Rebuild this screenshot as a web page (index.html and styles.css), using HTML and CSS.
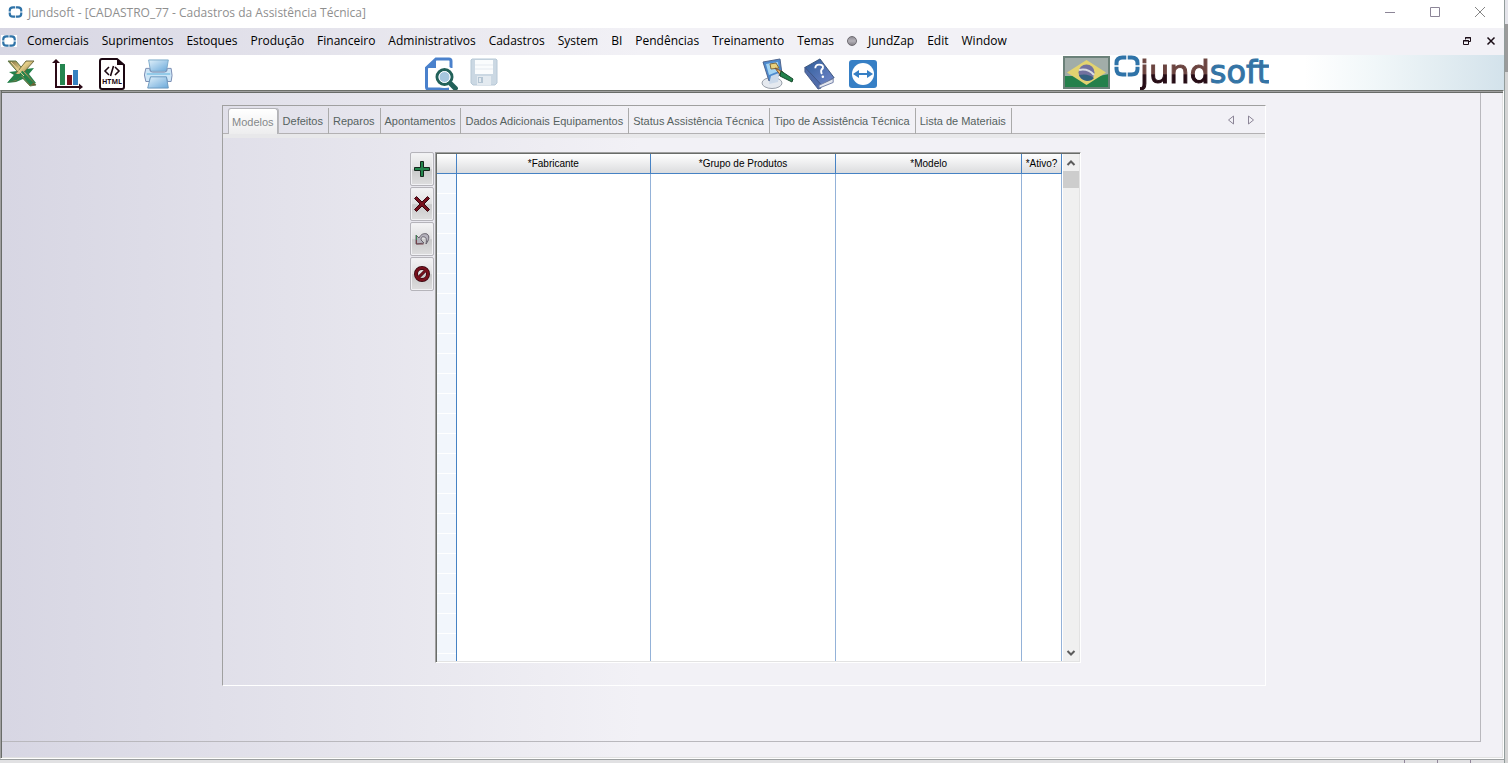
FILE: index.html
```
<!DOCTYPE html>
<html lang="pt-BR">
<head>
<meta charset="utf-8">
<title>Jundsoft - [CADASTRO_77 - Cadastros da Assistência Técnica]</title>
<link rel="stylesheet" href="styles.css">
</head>
<body>
<svg class="defs" aria-hidden="true">
  <defs>
    <linearGradient id="gold" x1="0" y1="0" x2="1" y2="1"><stop offset="0" stop-color="#7d6a3c"/><stop offset=".4" stop-color="#e6d08a"/><stop offset="1" stop-color="#5d4a22"/></linearGradient>
    <linearGradient id="sky" x1="0" y1="0" x2="1" y2="1"><stop offset="0" stop-color="#e0f0fa"/><stop offset="1" stop-color="#6aa9da"/></linearGradient>
    <linearGradient id="navy" x1="0" y1="0" x2="1" y2="1"><stop offset="0" stop-color="#2e5c98"/><stop offset="1" stop-color="#7488cc"/></linearGradient>
    <symbol id="mark" viewBox="0 0 26 22"><path d="M12.300 2.500H8.500Q2.500 2.500 2.500 8v2.300M13.700 2.500H17.500Q23.500 2.500 23.500 8v2.300M2.500 11.700V14Q2.500 19.500 8.500 19.500h3.800M23.500 11.700V14Q23.500 19.500 17.500 19.500h-3.800" fill="none" stroke="#2f73a8" stroke-width="4"/></symbol>
  </defs>
</svg>
<div class="screen">
  <div class="app">
    <header class="titlebar">
      <svg class="mark-small"><use href="#mark"/></svg>
      <h1>Jundsoft - [CADASTRO_77 - Cadastros da Assistência Técnica]</h1>
      <div class="window-buttons">
        <button aria-label="Minimizar"><svg width="12" height="12"><path d="M1 6.500h10" stroke="#8c8597" fill="none"/></svg></button>
        <button aria-label="Maximizar"><svg width="12" height="12"><path d="M1.500 1.500h9v9h-9z" stroke="#8c8597" fill="none"/></svg></button>
        <button aria-label="Fechar"><svg width="12" height="12"><path d="M1 1l10 10M11 1L1 11" stroke="#858585" fill="none"/></svg></button>
      </div>
    </header>
    <nav class="menubar">
      <svg class="mark-small boxed"><use href="#mark"/></svg>
      <div class="menus">
        <button>Comerciais</button><button>Suprimentos</button><button>Estoques</button><button>Produção</button><button>Financeiro</button><button>Administrativos</button><button>Cadastros</button><button>System</button><button>BI</button><button>Pendências</button><button>Treinamento</button><button>Temas</button><button class="zap"><span class="ball"></span>JundZap</button><button>Edit</button><button>Window</button>
      </div>
      <div class="child-buttons">
        <button aria-label="Restaurar"><svg width="10" height="10"><path d="M3.500 3.500v-2h5v4h-2M1.500 4.500h5v4h-5zM1 5h6M3 2h6" stroke="#1a0d16" fill="none"/></svg></button>
        <button aria-label="Fechar janela"><svg width="10" height="10"><path d="M1.500 1.500l7 7M8.500 1.500l-7 7" stroke="#1a0d16" stroke-width="1.500" fill="none"/></svg></button>
      </div>
    </nav>
    <div class="toolbar">
      <div class="tools files">
        <button aria-label="Excel"><svg width="30" height="30" viewBox="0 0 30 30"><path d="M19 10l8-1-5 6 7 9-8 1-5-5-7 3-9 1 7-8-5-3 8-1 4 2z" fill="#24814b"/><path d="M1 2h8l20 24-6 1z" fill="url(#gold)" stroke="#5f7a49"/><path d="M19 2h8L9 22H3z" fill="url(#gold)" stroke="#6f6b3e"/><path d="M14 13l11 12" stroke="#23824a" stroke-width="4"/><path d="M1 23l7-8h8l-6 6z" fill="#24814b"/><path d="M4 3l13 14" stroke="#f0dda0"/></svg></button>
        <button aria-label="Gráfico"><svg width="32" height="32" viewBox="0 0 32 32"><path d="M8 6h5v21H8z" fill="#24854f"/><path d="M15 17h5v10h-5z" fill="#74101c"/><path d="M21 12h5v15h-5z" fill="#3681c1"/><path d="M4 3v26h25" fill="none" stroke="#2b0a17" stroke-width="2"/><path d="M0 5l4-4 4 4zM27 25.500l4 3.500-4 3z" fill="#2b0a17"/></svg></button>
        <button aria-label="HTML"><svg width="26" height="32" viewBox="0 0 26 32"><path d="M3 1h15l7 6v22q0 2-2 2H3q-2 0-2-2V3q0-2 2-2z" fill="#fff" stroke="#1b0711" stroke-width="2"/><path d="M18 1v6h7z" fill="#1b0711"/><path d="M10 9l-4 4 4 4M16 9l4 4-4 4M14.500 8l-3 10" fill="none" stroke="#1b0711" stroke-width="1.600"/><text x="13" y="26" text-anchor="middle" class="html-label">HTML</text></svg></button>
        <button aria-label="Imprimir"><svg width="30" height="32" viewBox="0 0 32 34"><path d="M6 2h21l-2 12H8z" fill="url(#sky)" stroke="#79a8c9"/><path d="M3 11h4q0 4 3 4h13q3 0 3-4h4q2 8 0 14h-4l-1-4H8l-1 4H3q-3-7 0-14z" fill="#cce5f6" stroke="#7689b0"/><path d="M4 17h25" stroke="#8fc9e8" stroke-width="2"/><path d="M8 20h17l2 12H5z" fill="url(#sky)" stroke="#6796bd"/></svg></button>
      </div>
      <div class="tools records">
        <button aria-label="Pesquisar"><svg width="33" height="34" viewBox="0 0 33 34"><path d="M26 11V4q0-2-2-2H11L1.500 11v19q0 2 2 2H24" fill="none" stroke="#4a81cc" stroke-width="3"/><path d="M1 11L11 1v10z" fill="#4a81cc"/><circle cx="19.500" cy="20" r="11" fill="#fff"/><path d="M25 26l7 7" stroke="#226159" stroke-width="5"/><circle cx="19.500" cy="20" r="7.500" fill="#a6c7df" stroke="#226159" stroke-width="3"/><circle cx="19.500" cy="20" r="5.500" fill="none" stroke="#fff"/></svg></button>
        <button class="save" aria-label="Salvar" disabled><svg width="28" height="28" viewBox="0 0 28 28"><path d="M2 1h24l1 1v23l-2 2H3l-2-2V2z" fill="#cbd8e3" stroke="#b7c8d6"/><path d="M5 2h18v14H5z" fill="#fafcfd"/><path d="M5 7h18M5 11h18" stroke="#e5eaf0"/><path d="M7 18h14v9H7z" fill="#e3eaf0"/><path d="M8 19h5v6H8z" fill="#b4c5d3"/><path d="M10 20v4" stroke="#e3eaf0" stroke-width="2"/></svg></button>
      </div>
      <div class="tools support">
        <button aria-label="Aparência"><svg width="33" height="32" viewBox="0 0 33 32"><ellipse cx="11" cy="25" rx="10" ry="5.500" fill="#e5e9ef" stroke="#9aa0aa"/><path d="M2 4l17-3 2 15-13 7z" fill="#4d8ace" stroke="#50668f"/><path d="M5 6l12-2 1 9-10 4z" fill="#a4d4f3"/><path d="M9 6l6-1 3 5-8 1z" fill="#ead27e" stroke="#836b3b"/><path d="M8 26l2-8 8-3-1 9z" fill="#cbd9ea"/><path d="M14 10l8 4-2 4z" fill="#ebb968" stroke="#7d4e2b"/><path d="M20 13l12 8-1 3-12-6z" fill="#23834b" stroke="#16482c"/></svg></button>
        <button aria-label="Ajuda"><svg width="32" height="32" viewBox="0 0 34 34"><path d="M1 10L17 1l15 20-16 9z" fill="url(#navy)" stroke="#345078"/><path d="M1 10v5l14 18 3-1v-4z" fill="#4f6ba9" stroke="#415584"/><path d="M16 29l15-7v4l-15 6z" fill="#e4e7ef" stroke="#6d7ba3"/><path d="M12 11q0-4 4-4 5 0 4 4-3 2-1 6" fill="none" stroke="#fff" stroke-width="2"/><circle cx="20" cy="20" r="1.300" fill="#fff"/></svg></button>
        <button aria-label="Acesso remoto"><svg width="28" height="28" viewBox="0 0 28 28"><rect width="28" height="28" rx="3" fill="#367fc5"/><circle cx="14" cy="14" r="11" fill="#fff"/><path d="M4 14l6-4v3h8v-3l6 4-6 4v-3h-8v3z" fill="#367fc5"/></svg></button>
      </div>
      <div class="brand">
        <svg class="flag" viewBox="0 0 47 33"><path d="M0 0h47v33H0z" fill="#24804b"/><path d="M1 1h45v17l-10 2-12 2-12-2L1 20z" fill="#a1ada9"/><path d="M1 1h45v31H1z" fill="none" stroke="#6b8179" stroke-width="2"/><path d="M4 16.500L23.500 4 43 16.500 23.500 29z" fill="#e3d370"/><circle cx="23.500" cy="16.500" r="8" fill="#72719f"/><path d="M16 19q9-2 15 3-2 3-7 3-6-1-8-6z" fill="#336180"/><path d="M16 14q9-2 15 5" fill="none" stroke="#d9dce2" stroke-width="2"/></svg>
        <svg class="mark-large"><use href="#mark"/></svg>
        <span class="wordmark"><span class="jund">jund</span><span class="soft">soft</span></span>
        <span class="haze"></span>
      </div>
    </div>
    <main class="workspace">
      <div class="canvas">
        <section class="panel">
          <div class="tabstrip">
            <div class="tabs" role="tablist">
              <button role="tab" aria-selected="true">Modelos</button><button role="tab">Defeitos</button><button role="tab">Reparos</button><button role="tab">Apontamentos</button><button role="tab">Dados Adicionais Equipamentos</button><button role="tab">Status Assistência Técnica</button><button role="tab">Tipo de Assistência Técnica</button><button role="tab">Lista de Materiais</button>
            </div>
            <div class="tab-arrows">
              <button aria-label="Abas anteriores"><svg width="8" height="10"><path d="M6.500 1v8L1.500 5z" fill="none" stroke="#8c8597"/></svg></button>
              <button aria-label="Próximas abas"><svg width="8" height="10"><path d="M1.500 1v8l5-4z" fill="none" stroke="#8c8597"/></svg></button>
            </div>
          </div>
          <div class="content">
            <div class="actions">
              <button aria-label="Incluir"><svg width="18" height="18"><path d="M7.500 1.500h3v6h6v3h-6v6h-3v-6h-6v-3h6z" fill="#23864d" stroke="#15271d"/></svg></button>
              <button aria-label="Excluir"><svg width="18" height="18"><path d="M3.500 1.500L9 7l5.500-5.500 2 2L11 9l5.500 5.500-2 2L9 11l-5.500 5.500-2-2L7 9 1.500 3.500z" fill="#76101c" stroke="#36060e"/></svg></button>
              <button aria-label="Desfazer"><svg width="16" height="16"><path d="M2 4l3 3c2-4 5-5 8-4 3 2 2 6-1 10 1-5 0-7-2-7-2-1-3 1-3 3l3 3-8 1z" fill="#b5b2bc" stroke="#65606b"/><path d="M2.500 4v9h7" fill="none" stroke="#75424a"/><path d="M2.500 4v5" stroke="#408052"/></svg></button>
              <button aria-label="Cancelar"><svg width="18" height="18"><circle cx="9" cy="9" r="6" fill="none" stroke="#36060e" stroke-width="4"/><path d="M5 13l8-8" stroke="#36060e" stroke-width="3"/><circle cx="9" cy="9" r="6" fill="none" stroke="#76101c" stroke-width="2.500"/><path d="M5 13l8-8" stroke="#76101c" stroke-width="2"/></svg></button>
            </div>
            <div class="gridbox">
              <table>
                <colgroup><col class="c-handle"><col class="c-maker"><col class="c-group"><col class="c-model"><col class="c-active"></colgroup>
                <thead><tr><th></th><th>*Fabricante</th><th>*Grupo de Produtos</th><th>*Modelo</th><th>*Ativo?</th></tr></thead>
                <tbody><tr><td></td><td></td><td></td><td></td><td></td></tr></tbody>
              </table>
              <div class="scrollbar">
                <button aria-label="Rolar para cima"><svg width="10" height="8"><path d="M1.500 6L5 2.500 8.500 6" fill="none" stroke="#5c5c5c" stroke-width="2"/></svg></button>
                <div class="track"><div class="thumb"></div></div>
                <button aria-label="Rolar para baixo"><svg width="10" height="8"><path d="M1.500 2L5 5.500 8.500 2" fill="none" stroke="#5c5c5c" stroke-width="2"/></svg></button>
              </div>
            </div>
          </div>
        </section>
      </div>
    </main>
    <footer class="statusbar"><span></span><span></span><span></span></footer>
  </div>
  <aside class="edge"></aside>
</div>
</body>
</html>
```
FILE: styles.css
```
* { box-sizing: border-box; }
body { margin: 0; background: #fff; color: #000; font: 12px "Open Sans", "Noto Sans", sans-serif; }
button { display: flex; align-items: center; justify-content: center; margin: 0; padding: 0; border: 0; background: none; color: inherit; font: inherit; white-space: nowrap; }
svg { display: block; flex: none; }
.defs { position: absolute; width: 0; height: 0; }
.screen { display: flex; height: 100vh; }
.app { flex: 1; min-width: 0; display: flex; flex-direction: column; }
.edge { width: 4px; border-left: 1px solid #929c9b; background: linear-gradient(#e4e4ea 24px, #9b9b9b 24px, #9b9b9b 72px, #d4d4d4 72px); }

.titlebar { display: flex; align-items: center; height: 28px; padding: 0 18px 4px 8px; color: #8f8f8f; }
.titlebar h1 { flex: 1; margin: 2px 0 0 5px; font-size: 12px; font-weight: 400; line-height: 16px; }
.mark-small { width: 15px; height: 12px; }
.mark-small.boxed { width: 16px; background: #fff; }
.window-buttons { display: flex; gap: 33px; }

.menubar { display: flex; align-items: center; height: 27px; padding: 0 8px 2px 1px; background: linear-gradient(90deg, #d7d6e3, #e9e8ef 430px, #f2f1f6 640px); }
.menus { display: flex; flex: 1; gap: 13px; margin-left: 10px; }
.zap { gap: 11px; }
.ball { flex: none; width: 10px; height: 10px; border: 1px solid #6d6a70; border-radius: 50%; background: linear-gradient(#918e96, #b5b2b9 50%, #858289); }
.child-buttons { display: flex; gap: 14px; }

.toolbar { display: grid; grid-template-columns: 425fr 336fr 302fr 441fr; height: 35px; }
.tools { display: flex; align-items: center; padding-bottom: 1px; }
.files { gap: 15px; padding-left: 7px; }
.files button:last-child { margin-left: 3px; }
.html-label { font: 700 7px "Open Sans", sans-serif; fill: #1b0711; }
.records { gap: 12px; }
.save { padding-bottom: 4px; }
.support { gap: 10px; }
.support button:last-child { margin-left: 3px; }
.brand { display: flex; min-width: 0; }
.flag { width: 47px; height: 33px; margin: 1px 4px 0 0; }
.mark-large { width: 26px; height: 22px; }
.wordmark { display: flex; font: 32px/34px "DejaVu Sans", sans-serif; -webkit-text-stroke: 1px; }
.jund { height: 38px; color: transparent; background: linear-gradient(#6b4440 50%, #260c15 52%); -webkit-background-clip: text; background-clip: text; }
.soft { color: #3474a5; }
.haze { flex: 1; background: linear-gradient(90deg, #fff 15%, #f1f7f9 45%, #e1ecf1 75%, #d3e2eb); }

.workspace { flex: 1; min-height: 0; display: flex; border: 1px solid #6d706b; border-left-color: #a0a0a0; border-right-color: #fff; border-bottom-color: #fff; box-shadow: inset 1px 0 #696c69, inset 0 1px #a0a0a0, inset 0 2px #696c69, inset -1px -1px #e1e1e1; padding: 2px 22px 16px 1px; background: linear-gradient(90deg, #d7d6e3, #e9e8ef 430px, #f2f1f6 640px); }
.canvas { flex: 1; min-width: 0; display: flex; border-right: 1px solid #b9b8bd; border-bottom: 1px solid #b9b8bd; padding: 12px 214px 55px 220px; }
.panel { flex: 1; min-width: 0; display: flex; flex-direction: column; border: 1px solid #a0a0a0; border-right-color: #fff; border-bottom-color: #fff; }
.tabstrip { display: flex; align-items: flex-end; height: 32px; border-bottom: 4px solid #e8e8ea; box-shadow: inset 0 -1px #b3b1b3; padding-left: 5px; font: 11px/16px "Liberation Sans", sans-serif; color: #56625f; }
.tabs { display: flex; flex: 1; }
.tabs button { height: 26px; padding: 0 5px 0 4px; border-right: 1px solid #aaa; }
.tabs button:first-child { padding: 0 3px; margin-right: 1px; border: 1px solid #b3b3b8; border-bottom: 0; border-radius: 3px 3px 0 0; background: linear-gradient(#fff, #ededee); color: #85888a; box-shadow: 1px 0 #b9b9bb; }
.tab-arrows { display: flex; gap: 12px; align-self: center; margin-right: 10px; }
.content { flex: 1; min-height: 0; display: flex; gap: 1px; padding: 14px 184px 22px 187px; }
.actions { display: flex; flex-direction: column; gap: 1px; width: 24px; }
.actions button { height: 34px; border: 1px solid #b5b4ba; border-radius: 2px; box-shadow: inset 0 0 0 1px #f1f1f4; background: linear-gradient(#f4f4f5, #dfdfe0 50%, #c9c9ca 52%, #dededf); }
.gridbox { flex: 1; min-width: 0; display: flex; border: 1px solid #a0a0a0; border-right-color: #fff; border-bottom-color: #fff; box-shadow: inset 1px 1px #696c69, inset -1px -1px #e3e3e3; padding: 1px; background: #fff; background-clip: padding-box; }
table { width: 100%; min-width: 0; height: 100%; border-collapse: separate; border-spacing: 0; table-layout: fixed; }
.c-handle { width: 20px; }
.c-maker { width: 31%; }
.c-active { width: 40px; }
th { height: 20px; padding: 0; border-right: 1px solid #4682c4; border-bottom: 1px solid #4682c4; background: linear-gradient(#fff, #dbdcde); font: 10px/16px "Liberation Sans", sans-serif; white-space: nowrap; }
td { padding: 0; border-right: 1px solid #94b2d8; }
td:first-child { border-right-color: #4682c4; background: repeating-linear-gradient(#f2f6fc 0 19px, #fff 19px 20px); }
.scrollbar { flex: none; width: 16px; margin-left: 1px; display: flex; flex-direction: column; background: #f0f0f0; }
.scrollbar button { height: 17px; }
.track { flex: 1; }
.thumb { height: 17px; background: #cdcdcd; }

.statusbar { display: flex; justify-content: flex-end; gap: 32px; height: 4px; padding-right: 33px; border-top: 1px solid #9b9fa0; background: #e1e1e3; }
.statusbar span { width: 1px; background: #91869a; }
```
